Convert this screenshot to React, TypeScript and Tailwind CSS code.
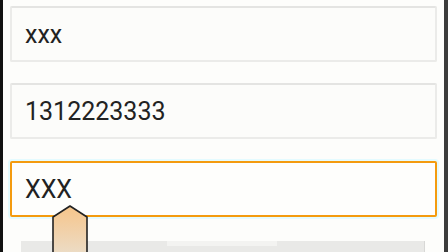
import React from 'react'

const font = { fontFamily: 'Roboto, "Liberation Sans", sans-serif' }

function Field({ value, focused }: { value: string; focused?: boolean }) {
  return (
    <div
      className={
        focused
          ? 'h-[56px] flex items-center pl-[13px] bg-[#fefefc] border-2 border-[#f49b0f] rounded-[2px] shadow-[0_0_0_2px_#e4fbff]'
          : 'h-[56px] flex items-center pl-[13px] bg-[#fcfcfa] border-2 border-[#ebebe9] border-t-[#e4e4e2] rounded-[2px]'
      }
    >
      <span className="text-[25px] leading-none text-[#222]" style={font}>
        {value}
      </span>
    </div>
  )
}

export default function App() {
  return (
    <div className="w-[448px] h-[252px] overflow-hidden flex bg-[#fdfdfb]">
      <div className="w-[3px] bg-[#111]" />
      <div className="relative flex-1 flex flex-col px-[7px] pt-[6px]">
        <div className="flex flex-col gap-[21px]">
          <Field value="xxx" />
          <Field value="1312223333" />
        </div>
        <div className="mt-[22px]">
          <Field value="XXX" focused />
        </div>
        <div className="mt-[24px] ml-[11px] mr-[12px] flex-1 flex bg-[#e9e9e7] border-r border-[#d8d8d6]">
          <div className="w-[146px]" />
          <div className="w-[110px] h-[5px] bg-[#f3f3f1]" />
        </div>
        {/* selection handle */}
        <svg
          className="absolute left-[47px] top-[204px]"
          width="40"
          height="50"
          viewBox="0 0 40 50"
        >
          <defs>
            <linearGradient id="hg" x1="0" y1="0" x2="0" y2="1">
              <stop offset="0" stopColor="#f6c58a" />
              <stop offset="1" stopColor="#ecdcc6" />
            </linearGradient>
          </defs>
          <path
            d="M20 2 L37 13 L37 50 L3 50 L3 13 Z"
            fill="url(#hg)"
            stroke="#222"
            strokeWidth="1.6"
            strokeLinejoin="round"
          />
        </svg>
      </div>
      <div className="w-[4px] bg-[#3c3c3c]" />
    </div>
  )
}
